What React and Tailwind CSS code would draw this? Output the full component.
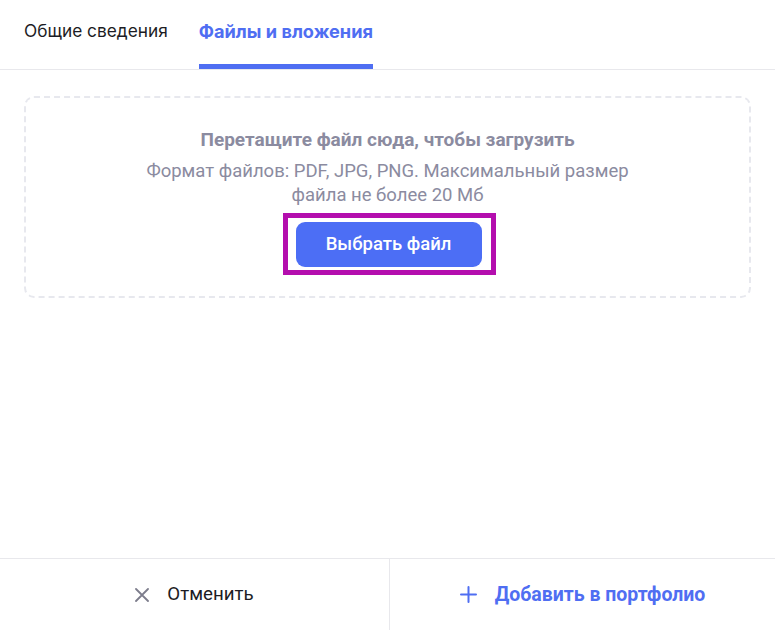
import { X, Plus } from "lucide-react";

function App() {
  return (
    <div className="h-[630px] w-[775px] bg-white flex flex-col font-['Roboto',sans-serif]">
      <div className="flex h-[70px] border-b border-[#e8e8ec] pl-6 gap-[31px] font-['Inter',sans-serif]">
        <button className="h-full flex items-center pb-[4px] text-[17.3px] text-[#1c1c24] border-b-4 border-transparent">
          Общие сведения
        </button>
        <button className="h-full flex items-center pb-0 text-[18.2px] font-bold text-[#4f6ef2] border-b-[5px] border-[#4f6ef2]">
          Файлы и вложения
        </button>
      </div>

      <div className="px-6 pt-[26px] flex-1">
        <div className="h-[202px] rounded-[10px] border-2 border-dashed border-[#e7e8ee] flex flex-col items-center pt-[30px]">
          <div className="text-[19px] font-bold text-[#8b8ba0] leading-6">
            Перетащите файл сюда, чтобы загрузить
          </div>
          <div className="mt-[7px] text-[18.5px] text-[#8b8ba0] leading-6 text-center w-[500px]">
            Формат файлов: PDF, JPG, PNG. Максимальный размер файла не более 20 Мб
          </div>
          <div className="mt-[6px] ml-[3px] border-[5px] border-[#b40eae] pl-2 pr-[9px] pt-1 pb-[3px]">
            <button className="w-[186px] h-[45px] rounded-[9px] bg-[#4c6ef5] text-white text-[18.5px] font-medium">
              Выбрать файл
            </button>
          </div>
        </div>
      </div>

      <div className="h-[72px] border-t border-[#e8e8ec] flex">
        <button className="w-[389px] flex items-center justify-center gap-[18px] text-[18.7px] text-[#1c1c24]">
          <svg width="14" height="14" viewBox="0 0 14 14" className="text-[#7d7d8c]">
            <path d="M1 1L13 13M13 1L1 13" stroke="currentColor" strokeWidth="1.8" strokeLinecap="round" />
          </svg>
          Отменить
        </button>
        <div className="w-px bg-[#e8e8ec]" />
        <button className="flex-1 flex items-center justify-center gap-[18px] text-[19.5px] font-bold text-[#4f6ef2]">
          <svg width="17" height="17" viewBox="0 0 17 17">
            <path d="M8.5 1V16M1 8.5H16" stroke="currentColor" strokeWidth="2" strokeLinecap="round" />
          </svg>
          Добавить в портфолио
        </button>
      </div>
    </div>
  );
}

export default App;
